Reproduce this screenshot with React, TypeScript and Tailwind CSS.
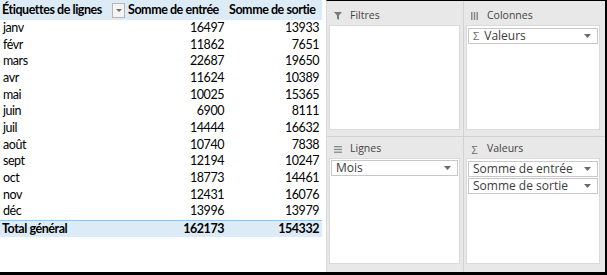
import React from 'react';

const rows: [string, number, number][] = [
  ['janv', 16497, 13933],
  ['févr', 11862, 7651],
  ['mars', 22687, 19650],
  ['avr', 11624, 10389],
  ['mai', 10025, 15365],
  ['juin', 6900, 8111],
  ['juil', 14444, 16632],
  ['août', 10740, 7838],
  ['sept', 12194, 10247],
  ['oct', 18773, 14461],
  ['nov', 12431, 16076],
  ['déc', 13996, 13979],
];

const tableFont = { fontFamily: 'Lato, "Liberation Sans", sans-serif' };
const paneFont = { fontFamily: '"Open Sans", "Noto Sans", sans-serif' };

function Caret() {
  return (
    <svg width="7" height="4" viewBox="0 0 7 4" className="shrink-0">
      <path d="M0 0 L7 0 L3.5 4 Z" fill="#6b6b6b" />
    </svg>
  );
}

function Field({ label, sigma }: { label: string; sigma?: boolean }) {
  return (
    <div className="h-[16px] border border-[#c8c8c8] bg-white flex items-center pl-[4px] pr-[6px] text-[12px] text-[#3c3c3c]">
      {sigma && <span className="text-[#6b6b6b] mr-[5px] text-[11px]">Σ</span>}
      <span className="flex-1 leading-none">{label}</span>
      <Caret />
    </div>
  );
}

function Quadrant({ icon, title, headH, children }: { icon: React.ReactNode; title: string; headH: string; children?: React.ReactNode }) {
  return (
    <div className="flex flex-col h-full">
      <div className={`${headH} flex items-center gap-[8px] pl-[4px] text-[10.5px] text-[#444]`}>
        <span className="w-[9px] flex justify-center">{icon}</span>
        <span>{title}</span>
      </div>
      <div className="flex-1 bg-white border border-[#dadada] flex flex-col gap-[1px] p-[1px]">{children}</div>
    </div>
  );
}

export default function App() {
  return (
    <div className="w-[607px] h-[275px] bg-white flex flex-col overflow-hidden">
      <div className="flex flex-1 min-h-0">
        {/* Tableau croisé */}
        <div className="w-[326px] text-black" style={tableFont}>
          <div className="w-[322px] text-[12.5px] tracking-[-0.45px]">
            <div className="h-[20px] bg-[#ddebf7] flex items-center font-bold">
              <div className="w-[126px] flex items-center pl-[2px]">
                <span className="flex-1 whitespace-nowrap">Étiquettes de lignes</span>
                <span className="w-[13px] h-[15px] mr-[1px] border border-[#b5b5b5] bg-[#f4f4f4] flex items-center justify-center">
                  <svg width="6" height="3" viewBox="0 0 6 3">
                    <path d="M0 0 L6 0 L3 3 Z" fill="#6f6f6f" />
                  </svg>
                </span>
              </div>
              <div className="w-[100px] pl-[2px] whitespace-nowrap">Somme de entrée</div>
              <div className="w-[96px] pl-[3px] whitespace-nowrap">Somme de sortie</div>
            </div>
            {rows.map(([m, a, b]) => (
              <div key={m} className="h-[16.67px] flex items-center">
                <div className="w-[126px] pl-[3px]">{m}</div>
                <div className="w-[98px] text-right">{a}</div>
                <div className="w-[95px] text-right">{b}</div>
              </div>
            ))}
            <div className="h-[17px] bg-[#ddebf7] border-t border-[#9bc2e6] flex items-center font-bold">
              <div className="w-[126px] pl-[2px]">Total général</div>
              <div className="w-[98px] text-right">162173</div>
              <div className="w-[95px] text-right">154332</div>
            </div>
          </div>
        </div>

        {/* Volet des champs */}
        <div className="flex-1 bg-[#e8e8e8] border-t border-r-2 border-black border-l border-l-[#d9d9d9] grid grid-cols-[136px_1px_1fr] grid-rows-[135px_1px_1fr]" style={paneFont}>
          <div className="pl-[2px] pr-[3px] pb-[6px]">
            <Quadrant
              headH="h-[24px] pt-[6px]"
              title="Filtres"
              icon={
                <svg width="8" height="8" viewBox="0 0 8 8">
                  <path d="M0 0 H8 L5 3.5 V8 L3 6.5 V3.5 Z" fill="#7a7a7a" />
                </svg>
              }
            />
          </div>
          <div className="bg-[#d2d2d2]" />
          <div className="pl-[2px] pr-[5px] pb-[6px]">
            <Quadrant
              headH="h-[24px] pt-[6px]"
              title="Colonnes"
              icon={
                <svg width="7" height="8" viewBox="0 0 7 8">
                  <rect x="0" y="0" width="1.5" height="8" fill="#8a8a8a" />
                  <rect x="2.75" y="0" width="1.5" height="8" fill="#8a8a8a" />
                  <rect x="5.5" y="0" width="1.5" height="8" fill="#8a8a8a" />
                </svg>
              }
            >
              <div className="mt-[1px]">
                <Field label="Valeurs" sigma />
              </div>
            </Quadrant>
          </div>
          <div className="bg-[#d2d2d2] col-span-3" />
          <div className="pl-[2px] pr-[3px] pb-[8px]">
            <Quadrant
              headH="h-[21px] pt-[3px]"
              title="Lignes"
              icon={
                <svg width="8" height="7" viewBox="0 0 8 7">
                  <rect x="0" y="0" width="8" height="1.3" fill="#8a8a8a" />
                  <rect x="0" y="2.8" width="8" height="1.3" fill="#8a8a8a" />
                  <rect x="0" y="5.6" width="8" height="1.3" fill="#8a8a8a" />
                </svg>
              }
            >
              <Field label="Mois" />
            </Quadrant>
          </div>
          <div className="bg-[#d2d2d2]" />
          <div className="pl-[2px] pr-[5px] pb-[8px]">
            <Quadrant headH="h-[21px] pt-[3px]" title="Valeurs" icon={<span className="text-[#6b6b6b] text-[11px] leading-none">Σ</span>}>
              <div className="mt-[1px] flex flex-col gap-[1px]">
                <Field label="Somme de entrée" />
                <Field label="Somme de sortie" />
              </div>
            </Quadrant>
          </div>
        </div>
      </div>
      <div className="h-[3px] bg-black shrink-0" />
    </div>
  );
}
